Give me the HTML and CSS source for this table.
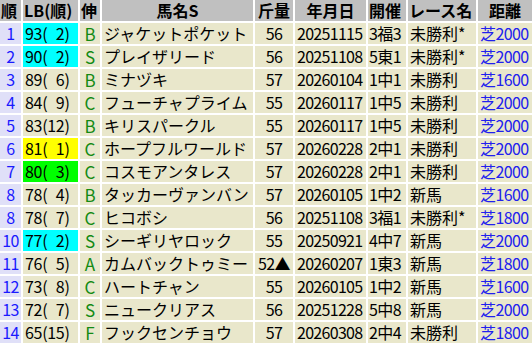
FILE: index.html
```html
<!DOCTYPE html>
<html lang="ja">
<head>
<meta charset="utf-8">
<link rel="stylesheet" href="styles.css">
</head>
<body>
<div class="tbl">
  <div class="h">順</div><div class="h">LB(順)</div><div class="h">伸</div><div class="h c">馬名S</div><div class="h c">斤量</div><div class="h c">年月日</div><div class="h">開催</div><div class="h">レース名</div><div class="h c">距離</div>

  <div class="no">1</div><div class="lb cy">93(&#8199;2)</div><div class="g">B</div><div class="nm">ジャケットポケット</div><div class="kg">56</div><div class="num">20251115</div><div class="pl">3福3</div><div class="rc">未勝利*</div><div class="ds">芝2000</div>

  <div class="no">2</div><div class="lb cy">90(&#8199;2)</div><div class="g">S</div><div class="nm">プレイザリード</div><div class="kg">56</div><div class="num">20251108</div><div class="pl">5東1</div><div class="rc">未勝利*</div><div class="ds">芝2000</div>

  <div class="no">3</div><div class="lb">89(&#8199;6)</div><div class="g">B</div><div class="nm">ミナヅキ</div><div class="kg">57</div><div class="num">20260104</div><div class="pl">1中1</div><div class="rc">未勝利</div><div class="ds">芝1600</div>

  <div class="no">4</div><div class="lb">84(&#8199;9)</div><div class="g">C</div><div class="nm">フューチャプライム</div><div class="kg">55</div><div class="num">20260117</div><div class="pl">1中5</div><div class="rc">未勝利</div><div class="ds">芝2000</div>

  <div class="no">5</div><div class="lb">83(12)</div><div class="g">B</div><div class="nm">キリスパークル</div><div class="kg">55</div><div class="num">20260117</div><div class="pl">1中5</div><div class="rc">未勝利</div><div class="ds">芝2000</div>

  <div class="no">6</div><div class="lb ye">81(&#8199;1)</div><div class="g">C</div><div class="nm">ホープフルワールド</div><div class="kg">57</div><div class="num">20260228</div><div class="pl">2中1</div><div class="rc">未勝利</div><div class="ds">芝2000</div>

  <div class="no">7</div><div class="lb gr">80(&#8199;3)</div><div class="g">C</div><div class="nm">コスモアンタレス</div><div class="kg">57</div><div class="num">20260228</div><div class="pl">2中1</div><div class="rc">未勝利</div><div class="ds">芝2000</div>

  <div class="no">8</div><div class="lb">78(&#8199;4)</div><div class="g">B</div><div class="nm">タッカーヴァンバン</div><div class="kg">57</div><div class="num">20260105</div><div class="pl">1中2</div><div class="rc">新馬</div><div class="ds">芝1600</div>

  <div class="no">8</div><div class="lb">78(&#8199;7)</div><div class="g">C</div><div class="nm">ヒコボシ</div><div class="kg">56</div><div class="num">20251108</div><div class="pl">3福1</div><div class="rc">未勝利*</div><div class="ds">芝1800</div>

  <div class="no">10</div><div class="lb cy">77(&#8199;2)</div><div class="g">S</div><div class="nm">シーギリヤロック</div><div class="kg">55</div><div class="num">20250921</div><div class="pl">4中7</div><div class="rc">新馬</div><div class="ds">芝2000</div>

  <div class="no">11</div><div class="lb">76(&#8199;5)</div><div class="g">A</div><div class="nm">カムバックトゥミー</div><div class="kg">52▲</div><div class="num">20260207</div><div class="pl">1東3</div><div class="rc">新馬</div><div class="ds">芝1800</div>

  <div class="no">12</div><div class="lb">73(&#8199;8)</div><div class="g">C</div><div class="nm">ハートチャン</div><div class="kg">55</div><div class="num">20260105</div><div class="pl">1中2</div><div class="rc">新馬</div><div class="ds">芝1600</div>

  <div class="no">13</div><div class="lb">72(&#8199;7)</div><div class="g">S</div><div class="nm">ニュークリアス</div><div class="kg">56</div><div class="num">20251228</div><div class="pl">5中8</div><div class="rc">新馬</div><div class="ds">芝2000</div>

  <div class="no">14</div><div class="lb">65(15)</div><div class="g">F</div><div class="nm">フックセンチョウ</div><div class="kg">57</div><div class="num">20260308</div><div class="pl">2中4</div><div class="rc">未勝利</div><div class="ds">芝1800</div>
</div>
</body>
</html>
```
FILE: styles.css
```css
html, body {
  margin: 0;
  padding: 0;
  background: #ffffff;
}
.tbl {
  display: grid;
  grid-template-columns: 21px 55px 20px 151px 38px 71px 38px 68px 54px;
  grid-auto-rows: 21px;
  gap: 2px;
  width: 532px;
  font-family: "Noto Sans CJK JP", "Noto Sans", sans-serif;
  font-size: 16px;
  line-height: 21px;
  color: #000;
}
.tbl > div {
  background: #e9e7cb;
  white-space: nowrap;
  padding: 0 2px;
}
.tbl > .h {
  background: #c0c0c0;
  font-weight: bold;
  padding: 0 1px;
}
.tbl > .c {
  text-align: center;
}
.tbl > .no {
  background: #e0e0f8;
  color: #1a1aff;
  text-align: center;
  padding: 0;
  letter-spacing: -0.6px;
}
.tbl > .lb {
  letter-spacing: -0.3px;
}
.tbl > .cy { background: #00ffff; }
.tbl > .ye { background: #ffff00; }
.tbl > .gr { background: #00ff00; }
.tbl > .g {
  color: #138a13;
  text-align: center;
  padding: 0;
  font-size: 17px;
}
.tbl > .kg {
  text-align: center;
  letter-spacing: -0.6px;
}
.tbl > .num {
  letter-spacing: -0.7px;
}
.tbl > .pl {
  letter-spacing: -0.6px;
  padding: 0 1px;
}
.tbl > .ds {
  color: #2020ee;
  letter-spacing: -0.6px;
}
```
